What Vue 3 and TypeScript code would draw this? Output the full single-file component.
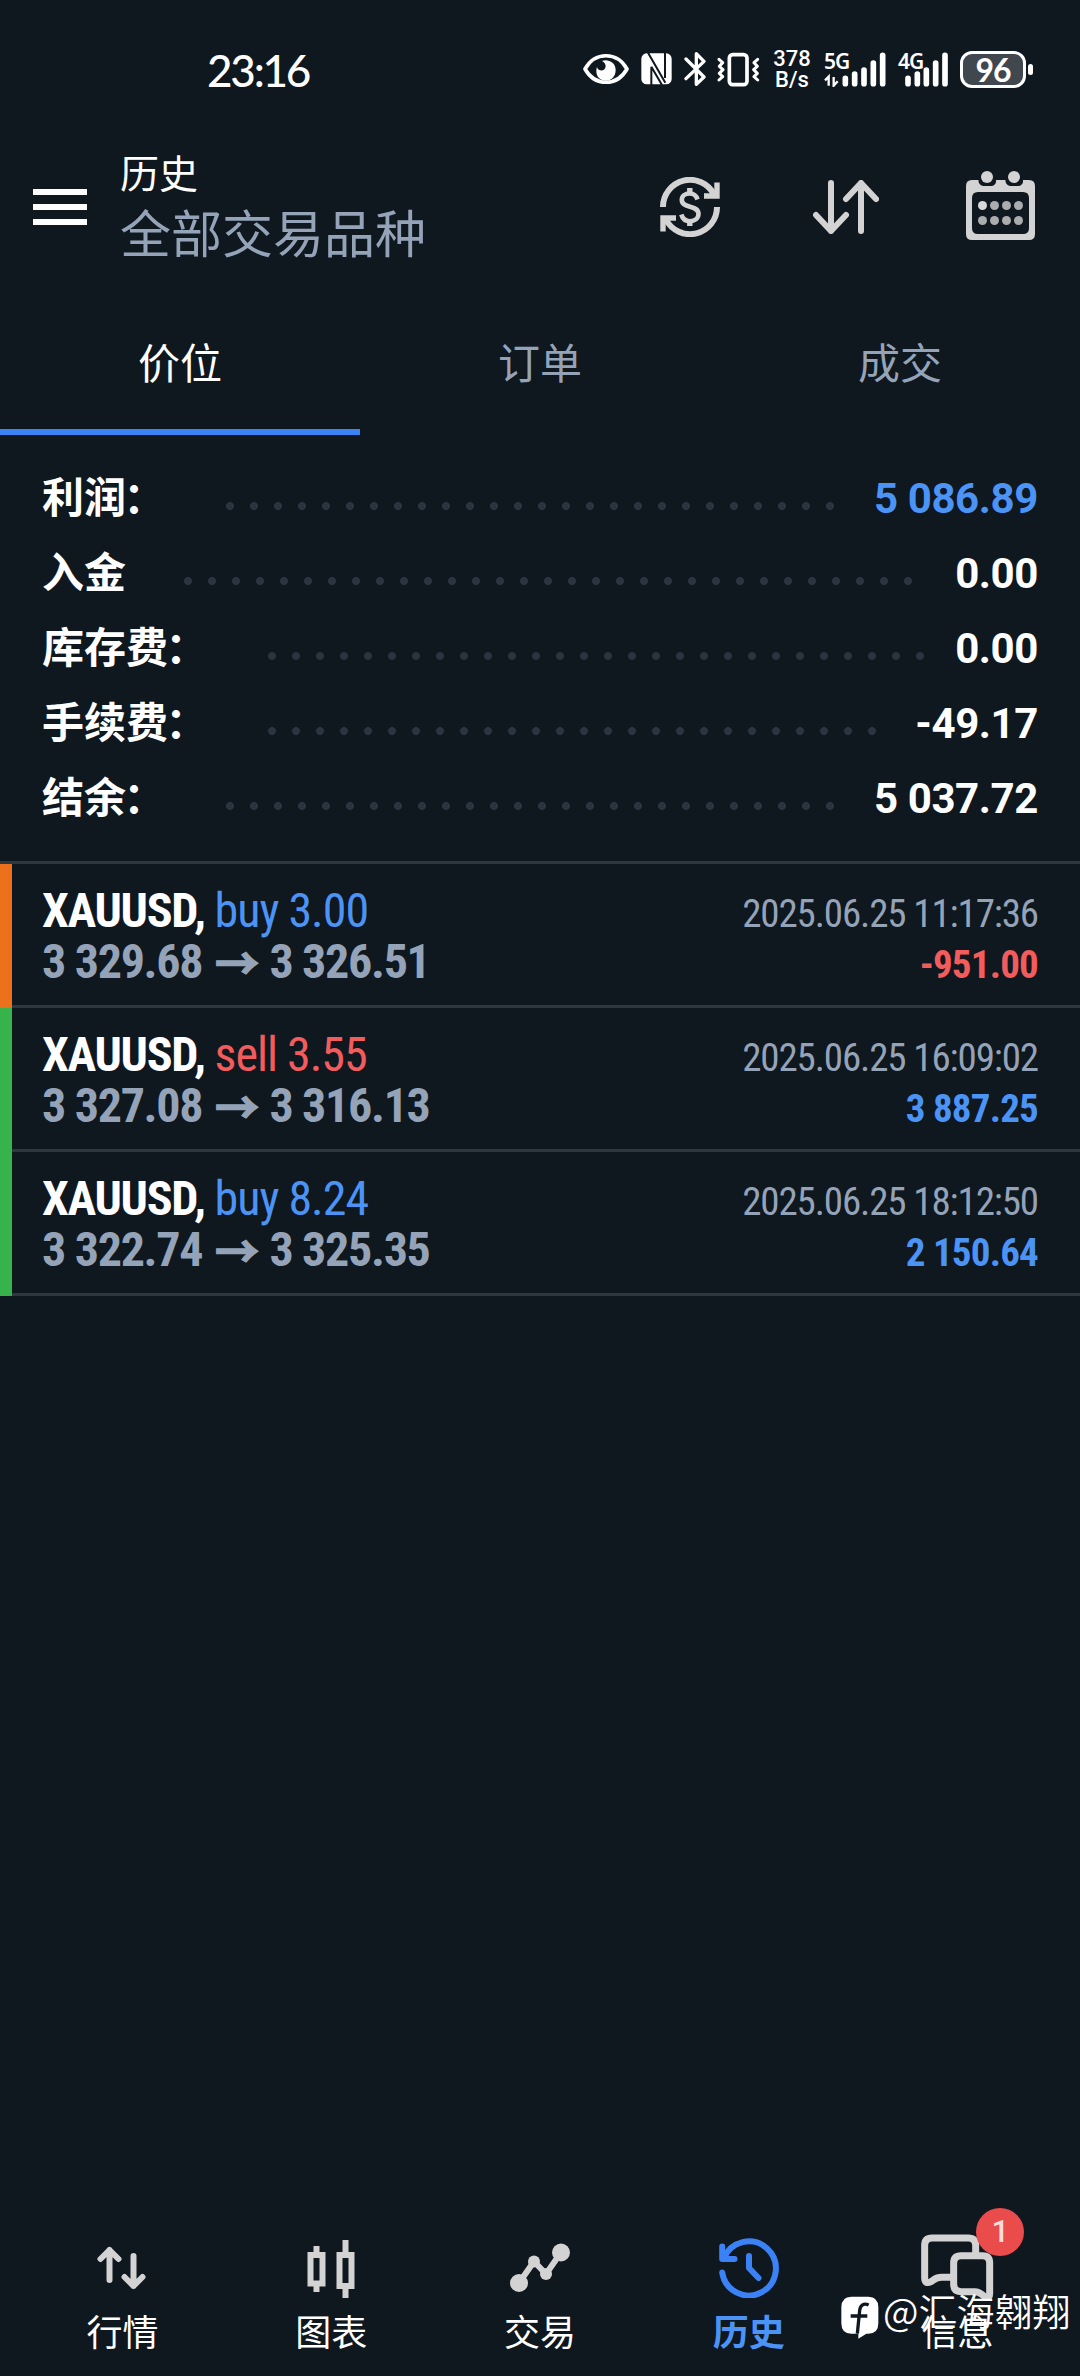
<script setup lang="ts">
interface SummaryRow {
  label: string
  colon: boolean
  value: string
  dots: number
  blue?: boolean
}

interface Deal {
  symbol: string
  side: 'buy' | 'sell'
  volume: string
  open: string
  close: string
  time: string
  profit: string
  positive: boolean
}

const tabs: string[] = ['价位', '订单', '成交']

const summary: SummaryRow[] = [
  { label: '利润', colon: true, value: '5 086.89', dots: 26, blue: true },
  { label: '入金', colon: false, value: '0.00', dots: 31 },
  { label: '库存费', colon: true, value: '0.00', dots: 28 },
  { label: '手续费', colon: true, value: '-49.17', dots: 26 },
  { label: '结余', colon: true, value: '5 037.72', dots: 26 },
]

const deals: Deal[] = [
  { symbol: 'XAUUSD', side: 'buy', volume: '3.00', open: '3 329.68', close: '3 326.51', time: '2025.06.25 11:17:36', profit: '-951.00', positive: false },
  { symbol: 'XAUUSD', side: 'sell', volume: '3.55', open: '3 327.08', close: '3 316.13', time: '2025.06.25 16:09:02', profit: '3 887.25', positive: true },
  { symbol: 'XAUUSD', side: 'buy', volume: '8.24', open: '3 322.74', close: '3 325.35', time: '2025.06.25 18:12:50', profit: '2 150.64', positive: true },
]
</script>

<template>
  <div class="screen">
    <div class="status">
      <span class="clock">23:16</span>
      <div class="indicators">
        <svg class="eye" width="46" height="32" viewBox="39 71 138 96">
          <path d="M45 119C75 66 141 66 171 119C141 172 75 172 45 119Z" fill="none" stroke="#fff" stroke-width="11" stroke-linejoin="round" />
          <path d="M96 95C112 88 137 98 137 122C137 142 124 154 108 154C91 154 79 143 79 125C79 120 80 116 81 114C86 128 106 127 107 111C107 104 103 98 96 95Z" fill="#fff" />
        </svg>
        <svg class="nfc" width="31" height="32" viewBox="213 71 93 96">
          <rect x="214" y="72" width="91" height="93" rx="16" fill="#fff" />
          <path d="M234 70L286 160M285 70V146M244 112V167M244 112L276 167" fill="none" stroke="#0f171f" stroke-width="6" />
        </svg>
        <svg class="bt" width="22" height="36" viewBox="341 65 66 108">
          <path d="M347 89L401 143L378 165V73L401 96L347 148" fill="none" stroke="#fff" stroke-width="10" stroke-linejoin="round" stroke-linecap="round" />
        </svg>
        <svg class="vib" width="44" height="35" viewBox="443 66 132 105">
          <rect x="480" y="74" width="53" height="90" rx="10" fill="none" stroke="#fff" stroke-width="11" />
          <path d="M449 88L460 98L450 109L461 119L450 130L460 140L449 150M565 88L554 98L564 109L553 119L564 130L554 140L565 150" fill="none" stroke="#fff" stroke-width="9" stroke-linecap="round" stroke-linejoin="round" />
        </svg>
        <div class="speed"><span>378</span><span>B/s</span></div>
        <div class="signal signal-5g">
          <span class="net">5G</span>
          <svg width="62" height="35" viewBox="73 63 186 105">
            <path d="M137 142V158M165 129V158M193 117V158M221 96V158M249 73V158" stroke="#fff" stroke-width="17" stroke-linecap="round" />
            <path d="M76 148L87 137V164M102 138V164L114 151" fill="none" stroke="#fff" stroke-width="7" />
          </svg>
        </div>
        <div class="signal signal-4g">
          <span class="net">4G</span>
          <svg width="50" height="35" viewBox="294 63 150 105">
            <path d="M324 142V158M352 129V158M379 117V158M407 96V158M435 73V158" stroke="#fff" stroke-width="17" stroke-linecap="round" />
          </svg>
        </div>
        <div class="battery">96</div>
        <i class="battery-tip"></i>
      </div>
    </div>

    <header class="header">
      <div class="menu"><i></i><i></i><i></i></div>
      <div class="titles">
        <div class="title">历史</div>
        <div class="subtitle">全部交易品种</div>
      </div>
      <svg class="act-currency" width="60" height="60" viewBox="0 0 60 60" fill="none" stroke="#d3d3d3">
        <path d="M3 30A27 27 0 0 1 54 17.500M57 30A27 27 0 0 1 6 42.500" stroke-width="6" />
        <path d="M57 5.500V19H44M3 54.500V41H16" stroke-width="5.400" />
        <path d="M37.500 22.500C36 17.500 32.500 16.500 29.700 16.500C25 16.500 21.800 19.200 21.800 23C21.800 32 38.500 27.500 38.500 36.800C38.500 41.500 34.500 44.200 30 44.200C25.500 44.200 22.500 41.500 21.300 37.500" stroke-width="4.600" />
        <path d="M29.800 11V17.500M29.800 43V49" stroke-width="5.400" />
      </svg>
      <svg class="act-sort" width="66" height="54" viewBox="0 0 66 54" fill="none" stroke="#d3d3d3" stroke-width="6" stroke-linecap="round" stroke-linejoin="round">
        <path d="M18 3V51M3 35L18 51L33 35M48 51V3M33 19L48 3L63 19" />
      </svg>
      <svg class="act-calendar" width="69" height="69" viewBox="0 0 69 69">
        <path fill-rule="evenodd" d="M6 9H12.500C12 12.500 15 15 18 15H24.500C28.500 15 30.500 12 30 9H39.500C39 12.500 42 15 45 15H51.500C55.500 15 57.500 12 57 9H63Q69 9 69 15V63Q69 69 63 69H6Q0 69 0 63V15Q0 9 6 9ZM12 21Q6 21 6 27V57Q6 63 12 63H57Q63 63 63 57V27Q63 21 57 21Z" fill="#d3d3d3" />
        <circle cx="21" cy="6" r="6" fill="#d3d3d3" /><circle cx="48" cy="6" r="6" fill="#d3d3d3" />
        <circle cx="16.500" cy="34.500" r="4.500" fill="#d8d8d8" />
        <g fill="#aaacae">
          <circle cx="28.500" cy="34.500" r="4.500" /><circle cx="40.500" cy="34.500" r="4.500" /><circle cx="52.500" cy="34.500" r="4.500" />
          <circle cx="16.500" cy="49.500" r="4.500" /><circle cx="28.500" cy="49.500" r="4.500" /><circle cx="40.500" cy="49.500" r="4.500" /><circle cx="52.500" cy="49.500" r="4.500" />
        </g>
      </svg>
    </header>

    <nav class="tabs">
      <div v-for="(tab, i) in tabs" :key="tab" class="tab" :class="{ active: i === 0 }">{{ tab }}</div>
    </nav>

    <section class="summary">
      <div v-for="row in summary" :key="row.label" class="sum-row">
        <span class="sum-label">{{ row.label }}<span v-if="row.colon" class="colon">：</span></span>
        <i class="leader" :style="{ width: row.dots * 24 + 'px' }"></i>
        <span class="sum-value" :class="{ blue: row.blue }">{{ row.value }}</span>
      </div>
    </section>

    <section class="deals">
      <article v-for="deal in deals" :key="deal.time" class="deal">
        <i class="mark" :class="deal.positive ? 'gain' : 'loss'"></i>
        <div class="deal-body">
          <div class="line">
            <span class="symbol">{{ deal.symbol }}, <span class="side" :class="deal.side">{{ deal.side }} {{ deal.volume }}</span></span>
            <span class="time">{{ deal.time }}</span>
          </div>
          <div class="line">
            <span class="prices">{{ deal.open }} <span class="arrow">→</span> {{ deal.close }}</span>
            <span class="profit" :class="deal.positive ? 'buy' : 'sell'">{{ deal.profit }}</span>
          </div>
        </div>
      </article>
    </section>

    <footer class="bottom">
      <div class="item">
        <svg width="60" height="60" viewBox="0 0 60 60" fill="none" stroke="#d3d3d3" stroke-width="6" stroke-linecap="round" stroke-linejoin="round">
          <path d="M17.500 42V12M8.500 21L17.500 12L26.500 21M41.500 18V48M32.500 39L41.500 48L50.500 39" />
        </svg>
        <span>行情</span>
      </div>
      <div class="item">
        <svg width="60" height="60" viewBox="0 0 60 60" fill="none" stroke="#d3d3d3" stroke-width="6">
          <path d="M9.500 17H21.500V45.500H9.500ZM15.500 8V14M15.500 48V54M38.500 17H50.500V48H38.500ZM44.500 2V14M44.500 51V60" />
        </svg>
        <span>图表</span>
      </div>
      <div class="item">
        <svg width="60" height="60" viewBox="0 0 60 60" fill="#d3d3d3">
          <path d="M9 45L24 23.500L36 36L51 14.500" fill="none" stroke="#d3d3d3" stroke-width="6" />
          <circle cx="9" cy="45" r="9" /><circle cx="24" cy="23.500" r="6" /><circle cx="36" cy="36" r="6" /><circle cx="51" cy="14.500" r="9" />
        </svg>
        <span>交易</span>
      </div>
      <div class="item current">
        <svg width="60" height="60" viewBox="0 0 60 60" fill="none" stroke="#3b82f6" stroke-width="6" stroke-linecap="round" stroke-linejoin="round">
          <path d="M3.200 34.500A27 27 0 1 0 4.800 20.500M3.200 8.500V21H15.500M30 18V30L39.500 40" />
        </svg>
        <span>历史</span>
      </div>
      <div class="item">
        <svg class="chat" width="73" height="66" viewBox="725 131 219 198" fill="none" stroke="#d3d3d3" stroke-width="21" stroke-linejoin="round">
          <path d="M889 196V165Q889 143 867 143H758Q736 143 736 165V262Q736 283 755 274C768 266 769 261 787 261H825" />
          <path d="M845 196H910Q931 196 931 218V310Q931 326 919 321C905 312 903 304 887 304H845Q823 304 823 282V218Q823 196 845 196Z" />
        </svg>
        <b class="badge">1</b>
        <span>信息</span>
      </div>
    </footer>

    <div class="watermark">
      <svg width="38" height="43" viewBox="484 318 114 129">
        <path d="M515 320H566Q596 320 596 352V400Q596 431 566 431H560L536 446V431H515Q485 431 485 400V352Q485 320 515 320Z" fill="#fff" />
        <path d="M567 345C552 338 542 346 540 361L533 431M513 378H563" fill="none" stroke="#0f171f" stroke-width="10" />
      </svg>
      <span>@汇海翱翔</span>
    </div>
  </div>
</template>

<style>
body {
  background: #0f171f;
}
</style>

<style scoped>
.screen {
  position: relative;
  display: flex;
  flex-direction: column;
  width: 1080px;
  height: 2376px;
  overflow: hidden;
  background: #0f171f;
  color: #fff;
  font-family: Roboto, "Noto Sans CJK SC", sans-serif;
}
.screen svg {
  display: block;
  flex: none;
}

.status {
  display: flex;
  justify-content: space-between;
  height: 140px;
  padding: 0 47px 0 207px;
  box-sizing: border-box;
}
.clock {
  margin-top: 40px;
  line-height: 60px;
  font-family: Lato, sans-serif;
  font-size: 44px;
  font-weight: 500;
  letter-spacing: -2.200px;
}
.indicators {
  display: flex;
  height: 40px;
  margin-top: 49px;
  align-items: center;
}
.nfc { margin-left: 12px; }
.bt { margin-left: 12px; }
.vib { margin-left: 11px; }
.speed {
  display: flex;
  flex-direction: column;
  align-items: center;
  width: 38px;
  margin-left: 12px;
  font-size: 22px;
  font-weight: 500;
  line-height: 21px;
}
.signal {
  position: relative;
  margin-left: 13px;
}
.signal-4g { margin-left: 12px; }
.net {
  position: absolute;
  left: 0;
  top: -1px;
  font-family: "Noto Sans", sans-serif;
  font-size: 21px;
  font-weight: 600;
  line-height: 20px;
  letter-spacing: -1px;
}
.battery {
  width: 66px;
  height: 37px;
  margin-left: 12px;
  box-sizing: border-box;
  border: 3px solid #fff;
  border-radius: 12px;
  background: #41474e;
  text-align: center;
  line-height: 31px;
  font-family: Lato, sans-serif;
  font-size: 32px;
  font-weight: 700;
  letter-spacing: -1px;
}
.battery-tip {
  width: 5px;
  height: 11px;
  margin-left: 2px;
  border-radius: 3px;
  background: #fff;
}

.header {
  display: flex;
  height: 150px;
  padding: 0 45px 0 33px;
}
.menu {
  display: flex;
  flex-direction: column;
  gap: 9px;
  width: 54px;
  margin-top: 49px;
}
.menu i {
  height: 6px;
  background: #fff;
}
.titles {
  flex: 1;
  margin-left: 33px;
}
.title {
  margin-top: 10px;
  font-size: 39px;
  line-height: 50px;
}
.subtitle {
  margin-top: 6px;
  font-size: 51px;
  line-height: 60px;
  color: #94a3b8;
}
.act-currency { margin-top: 37px; }
.act-sort { margin: 40px 0 0 93px; }
.act-calendar { margin: 31px 0 0 87px; }

.tabs {
  display: flex;
  height: 145px;
}
.tab {
  flex: 1;
  box-sizing: border-box;
  border-bottom: 6px solid transparent;
  padding-top: 45px;
  text-align: center;
  font-size: 42px;
  line-height: 60px;
  color: #94a3b8;
}
.tab.active {
  border-color: #3b82f6;
  color: #fff;
}

.summary {
  height: 426px;
  padding: 26px 42px 0;
  box-sizing: border-box;
}
.sum-row {
  display: flex;
  align-items: center;
  height: 75px;
  font-size: 42px;
  font-weight: 700;
  line-height: 75px;
}
.colon {
  margin: 0 2.500px 0 -2.500px;
}
.leader {
  height: 8px;
  margin: 15px 0 0 50px;
  background: radial-gradient(circle at 12px 4px, #2d3440 3.600px, transparent 4.300px) 0 0 / 24px 8px repeat-x;
}
.sum-value {
  margin-left: auto;
  letter-spacing: -0.400px;
}
.blue { color: #4b93f5; }

.deals {
  border-top: 3px solid #2e3642;
}
.deal {
  display: flex;
  height: 144px;
}
.mark {
  width: 12px;
}
.loss { background: #ec711a; }
.gain { background: #36b34a; }
.deal-body {
  flex: 1;
  box-sizing: border-box;
  padding: 21px 42px 0 30px;
  border-bottom: 3px solid #2e3642;
  font-family: "Roboto Condensed", Roboto, "Noto Sans CJK SC", sans-serif;
  font-stretch: 75%;
}
.line {
  display: flex;
  justify-content: space-between;
  height: 51px;
  line-height: 51px;
  white-space: pre;
}
.symbol,
.prices {
  font-size: 48px;
  font-weight: 700;
  letter-spacing: -1.300px;
}
.side {
  font-weight: 400;
  letter-spacing: -1px;
}
.arrow {
  margin: 0 2px 0 3px;
  font-size: 44px;
  line-height: 40px;
  vertical-align: -2px;
  -webkit-text-stroke: 1.500px #94a3b8;
}
.buy { color: #4b93f5; }
.sell { color: #f25c5c; }
.prices { color: #94a3b8; }
.time,
.profit {
  margin-top: 4px;
  font-size: 39px;
}
.time {
  color: #94a3b8;
  letter-spacing: -1.130px;
}
.profit {
  font-weight: 700;
  letter-spacing: -0.800px;
}

.bottom {
  display: flex;
  height: 156px;
  margin-top: auto;
  padding: 0 18px;
  box-sizing: border-box;
}
.item {
  position: relative;
  flex: 1;
  display: flex;
  flex-direction: column;
  align-items: center;
  padding-top: 18px;
  font-size: 36px;
  line-height: 48px;
}
.item span { margin-top: 12px; }
.item .chat { margin: -4px 0 -2px; }
.current {
  color: #4b93f5;
  font-weight: 700;
}
.badge {
  position: absolute;
  left: 123px;
  top: -12px;
  width: 48px;
  height: 48px;
  border-radius: 50%;
  background: #ea4b4b;
  color: #ffdcdc;
  text-align: center;
  line-height: 48px;
  font-size: 31px;
  font-weight: 500;
}

.watermark {
  position: absolute;
  left: 841px;
  top: 2296px;
  display: flex;
  font-family: "Noto Sans CJK SC", sans-serif;
  font-weight: 350;
  font-size: 38px;
  line-height: 40px;
  white-space: nowrap;
}
.watermark span {
  margin: -6px 0 0 4px;
}
</style>
